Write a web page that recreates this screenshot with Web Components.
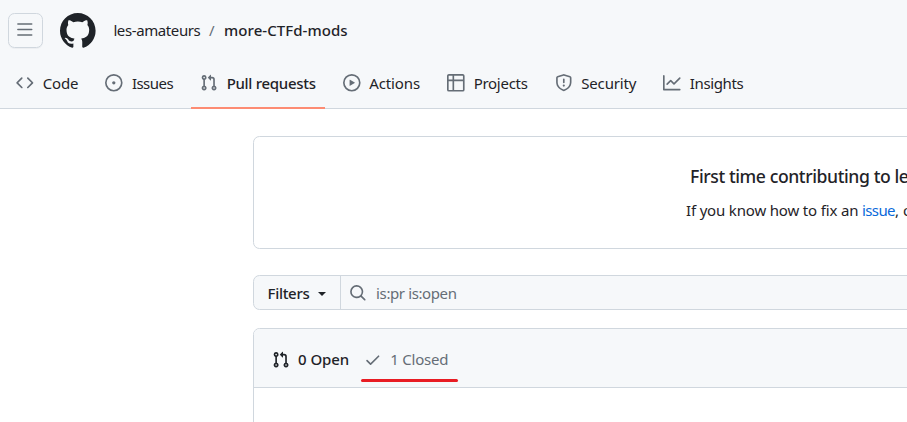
<!DOCTYPE html>
<html lang="en"><head><meta charset="utf-8"><title>Pull requests</title>
<style>
html,body{margin:0;height:422px;overflow:hidden;background:#fff}
body{font:15px/20px "Noto Sans","Open Sans",sans-serif;color:#1f2328}
</style></head><body>
<pulls-page></pulls-page>
<script>
const ICONS={
menu:'<path d="M1 2.75A.75.75 0 0 1 1.75 2h12.5a.75.75 0 0 1 0 1.5H1.75A.75.75 0 0 1 1 2.75Zm0 5A.75.75 0 0 1 1.75 7h12.5a.75.75 0 0 1 0 1.5H1.75A.75.75 0 0 1 1 7.75ZM1.75 12h12.5a.75.75 0 0 1 0 1.5H1.75a.75.75 0 0 1 0-1.5Z"/>',
mark:'<path d="M8 0c4.42 0 8 3.58 8 8a8.013 8.013 0 0 1-5.45 7.59c-.4.08-.55-.17-.55-.38 0-.27.01-1.13.01-2.2 0-.75-.25-1.23-.54-1.48 1.78-.2 3.65-.88 3.65-3.95 0-.88-.31-1.59-.82-2.15.08-.2.36-1.02-.08-2.12 0 0-.67-.22-2.2.82-.64-.18-1.32-.27-2-.27-.68 0-1.36.09-2 .27-1.53-1.03-2.2-.82-2.2-.82-.44 1.1-.16 1.92-.08 2.12-.51.56-.82 1.28-.82 2.15 0 3.06 1.86 3.75 3.64 3.95-.23.2-.44.55-.51 1.07-.46.21-1.61.55-2.33-.66-.15-.24-.6-.83-1.23-.82-.67.01-.27.38.01.53.34.19.73.9.82 1.13.16.45.68 1.31 2.69.94 0 .67.01 1.3.01 1.49 0 .21-.15.45-.55.38A7.995 7.995 0 0 1 0 8c0-4.42 3.58-8 8-8Z"/>',
code:'<path d="m11.28 3.22 4.25 4.25a.75.75 0 0 1 0 1.06l-4.25 4.25a.749.749 0 0 1-1.275-.326.749.749 0 0 1 .215-.734L13.94 8l-3.72-3.72a.749.749 0 0 1 .326-1.275.749.749 0 0 1 .734.215Zm-6.56 0a.751.751 0 0 1 1.042.018.751.751 0 0 1 .018 1.042L2.06 8l3.72 3.72a.749.749 0 0 1-.326 1.275.749.749 0 0 1-.734-.215L.47 8.53a.75.75 0 0 1 0-1.06Z"/>',
issue:'<path d="M8 9.5a1.5 1.5 0 1 0 0-3 1.5 1.5 0 0 0 0 3Z"/><path d="M8 0a8 8 0 1 1 0 16A8 8 0 0 1 8 0ZM1.5 8a6.5 6.5 0 1 0 13 0 6.5 6.5 0 0 0-13 0Z"/>',
pull:'<path d="M1.5 3.25a2.25 2.25 0 1 1 3 2.122v5.256a2.251 2.251 0 1 1-1.5 0V5.372A2.25 2.25 0 0 1 1.5 3.25Zm5.677-.177L9.573.677A.25.25 0 0 1 10 .854V2.5h1A2.5 2.5 0 0 1 13.5 5v5.628a2.251 2.251 0 1 1-1.5 0V5a1 1 0 0 0-1-1h-1v1.646a.25.25 0 0 1-.427.177L7.177 3.427a.25.25 0 0 1 0-.354ZM3.75 2.5a.75.75 0 1 0 0 1.5.75.75 0 0 0 0-1.5Zm0 9.5a.75.75 0 1 0 0 1.5.75.75 0 0 0 0-1.5Zm8.25.75a.75.75 0 1 0 1.5 0 .75.75 0 0 0-1.5 0Z"/>',
play:'<path d="M8 0a8 8 0 1 1 0 16A8 8 0 0 1 8 0ZM1.5 8a6.5 6.5 0 1 0 13 0 6.5 6.5 0 0 0-13 0Zm4.879-2.773 4.264 2.559a.25.25 0 0 1 0 .428l-4.264 2.559A.25.25 0 0 1 6 10.559V5.442a.25.25 0 0 1 .379-.215Z"/>',
table:'<path d="M0 1.75C0 .784.784 0 1.75 0h12.5C15.216 0 16 .784 16 1.75v12.5A1.75 1.75 0 0 1 14.25 16H1.75A1.75 1.75 0 0 1 0 14.25ZM6.5 6.5v8h7.75a.25.25 0 0 0 .25-.25V6.5Zm8-1.5V1.75a.25.25 0 0 0-.25-.25H6.5V5Zm-13 1.5v7.75c0 .138.112.25.25.25H5v-8ZM5 5V1.5H1.75a.25.25 0 0 0-.25.25V5Z"/>',
shield:'<path d="M7.467.133a1.748 1.748 0 0 1 1.066 0l5.25 1.68A1.75 1.75 0 0 1 15 3.48V7c0 1.566-.32 3.182-1.303 4.682-.983 1.498-2.585 2.813-5.032 3.855a1.697 1.697 0 0 1-1.33 0c-2.447-1.042-4.049-2.357-5.032-3.855C1.32 10.182 1 8.566 1 7V3.48a1.75 1.75 0 0 1 1.217-1.667Zm.61 1.429a.25.25 0 0 0-.153 0l-5.25 1.68a.25.25 0 0 0-.174.238V7c0 1.358.275 2.666 1.057 3.86.784 1.194 2.121 2.34 4.366 3.297a.196.196 0 0 0 .154 0c2.245-.956 3.582-2.104 4.366-3.298C13.225 9.666 13.5 8.36 13.5 7V3.48a.251.251 0 0 0-.174-.237l-5.25-1.68ZM8.75 4.75v3a.75.75 0 0 1-1.5 0v-3a.75.75 0 0 1 1.5 0ZM9 10.5a1 1 0 1 1-2 0 1 1 0 0 1 2 0Z"/>',
graph:'<path d="M1.5 1.75V13.5h13.75a.75.75 0 0 1 0 1.5H.75a.75.75 0 0 1-.75-.75V1.75a.75.75 0 0 1 1.5 0Zm14.28 2.53-5.25 5.25a.75.75 0 0 1-1.06 0L7 7.06 4.28 9.78a.751.751 0 0 1-1.042-.018.751.751 0 0 1-.018-1.042l3.25-3.25a.75.75 0 0 1 1.06 0L10 7.94l4.72-4.72a.751.751 0 0 1 1.042.018.751.751 0 0 1 .018 1.042Z"/>',
search:'<path d="M10.68 11.74a6 6 0 0 1-7.922-8.982 6 6 0 0 1 8.982 7.922l3.04 3.04a.749.749 0 0 1-.326 1.275.749.749 0 0 1-.734-.215ZM11.5 7a4.499 4.499 0 1 0-8.997 0A4.499 4.499 0 0 0 11.5 7Z"/>',
check:'<path d="M13.78 4.22a.75.75 0 0 1 0 1.06l-7.25 7.25a.75.75 0 0 1-1.06 0L2.22 9.28a.751.751 0 0 1 .018-1.042.751.751 0 0 1 1.042-.018L6 10.94l6.72-6.72a.75.75 0 0 1 1.06 0Z"/>'};

function define(name,html,ready){
  customElements.define(name,class extends HTMLElement{
    constructor(){super();this.attachShadow({mode:'open'}).innerHTML=html;}
    connectedCallback(){if(ready)ready(this);}
  });
}
const drawIcon=(icon,name)=>{icon.shadowRoot.querySelector('svg').innerHTML=ICONS[name]||'';};
define('oct-icon','<style>:host{display:block;flex:none;width:var(--size,17.6px);height:var(--size,17.6px)}svg{display:block;width:100%;height:100%;fill:currentColor;overflow:visible}</style><svg viewBox="0 0 16 16"></svg>',
  el=>{if(el.hasAttribute('name'))drawIcon(el,el.getAttribute('name'));});
/* A one-line label whose tracking is adjusted to occupy its "width" in pixels. */
define('fit-label','<style>:host{display:block;flex:none;white-space:pre}span{display:inline-block}</style><span><slot></slot></span>',
  el=>{const w=+el.getAttribute('width'),s=el.shadowRoot.querySelector('span');el.style.width=w+'px';
    s.style.letterSpacing='0';s.style.letterSpacing=((w-s.getBoundingClientRect().width)/el.textContent.length)+'px';});
define('nav-tab',`<style>:host{display:flex;align-items:center;box-sizing:border-box;height:51px;padding:0 9px 1px;gap:9px;border-bottom:2px solid transparent}
:host([selected]){border-bottom-color:#fd8c73;font-weight:500}oct-icon{color:#656d76;margin-top:1px}::slotted(*){padding-top:1px}</style><oct-icon></oct-icon><slot></slot>`,
  el=>drawIcon(el.shadowRoot.querySelector('oct-icon'),el.getAttribute('icon')));
define('site-header',`<style>:host{display:flex;flex-direction:column;box-sizing:border-box;height:109px;background:#f6f8fa;box-shadow:inset 0 -1px #d0d7de}
.top{display:flex;align-items:center;height:47px;padding:7px 0 0 8px}.top fit-label{padding-bottom:2px}
.menu{display:grid;place-items:center;box-sizing:border-box;width:35px;height:35px;border:1px solid #d0d7de;border-radius:6.5px;color:#656d76;box-shadow:0 1px rgba(31,35,40,.04)}
.menu oct-icon{margin-right:1px;margin-bottom:1px}
.mark{--size:35.6px;margin:0 17.8px 0 17px}.slash{color:#656d76;margin:0 9px 0 8.7px}.repo{font-weight:500}
nav{display:flex;gap:9px;padding:4px 0 0 7.2px}</style>
<div class="top"><div class="menu"><oct-icon name="menu"></oct-icon></div><oct-icon class="mark" name="mark"></oct-icon>
<fit-label width="87">les-amateurs</fit-label><fit-label class="slash" width="6">/</fit-label><fit-label class="repo" width="123.5">more-CTFd-mods</fit-label></div>
<nav><nav-tab icon="code"><fit-label width="35.5">Code</fit-label></nav-tab><nav-tab icon="issue"><fit-label width="41.2">Issues</fit-label></nav-tab>
<nav-tab icon="pull" selected><fit-label width="89">Pull requests</fit-label></nav-tab><nav-tab icon="play"><fit-label width="50.8">Actions</fit-label></nav-tab>
<nav-tab icon="table"><fit-label width="54">Projects</fit-label></nav-tab><nav-tab icon="shield"><fit-label width="55">Security</fit-label></nav-tab>
<nav-tab icon="graph"><fit-label width="53.5">Insights</fit-label></nav-tab></nav>`);
define('contribute-card',`<style>:host{display:flex;flex-direction:column;box-sizing:border-box;height:113px;border:1px solid #d0d7de;border-radius:6.5px;padding:26px 0 0 432px}
.title{font-size:17.6px;line-height:26px;font-weight:500;margin-left:4px}.line{display:flex;margin-top:11px}a{color:#0969da}</style>
<fit-label class="title" width="218.5">First time contributing to le</fit-label>
<div class="line"><fit-label width="176">If you know how to fix an </fit-label><a><fit-label width="33">issue</fit-label></a><span>, o</span></div>`);
define('filter-bar',`<style>:host{display:flex;box-sizing:border-box;height:35px;border:1px solid #d0d7de;border-radius:6.5px;background:#f6f8fa;overflow:hidden}
div{display:flex;align-items:center}.btn{box-sizing:border-box;width:87px;padding:0 0 0 13.5px;border-right:1px solid #d0d7de;font-weight:500;gap:8.5px}
i{border:4.4px solid transparent;border-top-color:#1f2328;border-bottom:0;margin-top:2px}.field{padding-left:7.5px;color:#656d76;gap:10px}.field oct-icon{margin-top:1px}</style>
<div class="btn"><fit-label width="42">Filters</fit-label><i></i></div><div class="field"><oct-icon name="search"></oct-icon><fit-label width="80.5">is:pr is:open</fit-label></div>`);
define('pull-list',`<style>:host{display:block;box-sizing:border-box;height:120px;border:1px solid #d0d7de;border-radius:6.5px;overflow:hidden}
header{display:flex;align-items:center;box-sizing:border-box;height:59px;padding:4px 0 0 18px;background:#f6f8fa;border-bottom:1px solid #d0d7de}
.state{display:flex;align-items:center;gap:8.5px}.state fit-label{padding-bottom:2px}.open{font-weight:500}.closed{position:relative;margin-left:15px;color:#656d76}
.closed::after{content:"";position:absolute;left:-3px;top:30px;width:96.5px;height:3px;border-radius:2px;background:#e81c23}</style>
<header><div class="state open"><oct-icon name="pull"></oct-icon><fit-label width="51">0 Open</fit-label></div><div class="state closed"><oct-icon name="check"></oct-icon><fit-label width="58">1 Closed</fit-label></div></header>`);
define('pulls-page',`<style>:host{display:block;width:907px;height:422px;overflow:hidden}main{display:flex;flex-direction:column;width:1126px;padding:27px 0 0 253px}
filter-bar{margin-top:26px}pull-list{margin-top:18px}</style><site-header></site-header><main><contribute-card></contribute-card><filter-bar></filter-bar><pull-list></pull-list></main>`);
</script></body></html>
